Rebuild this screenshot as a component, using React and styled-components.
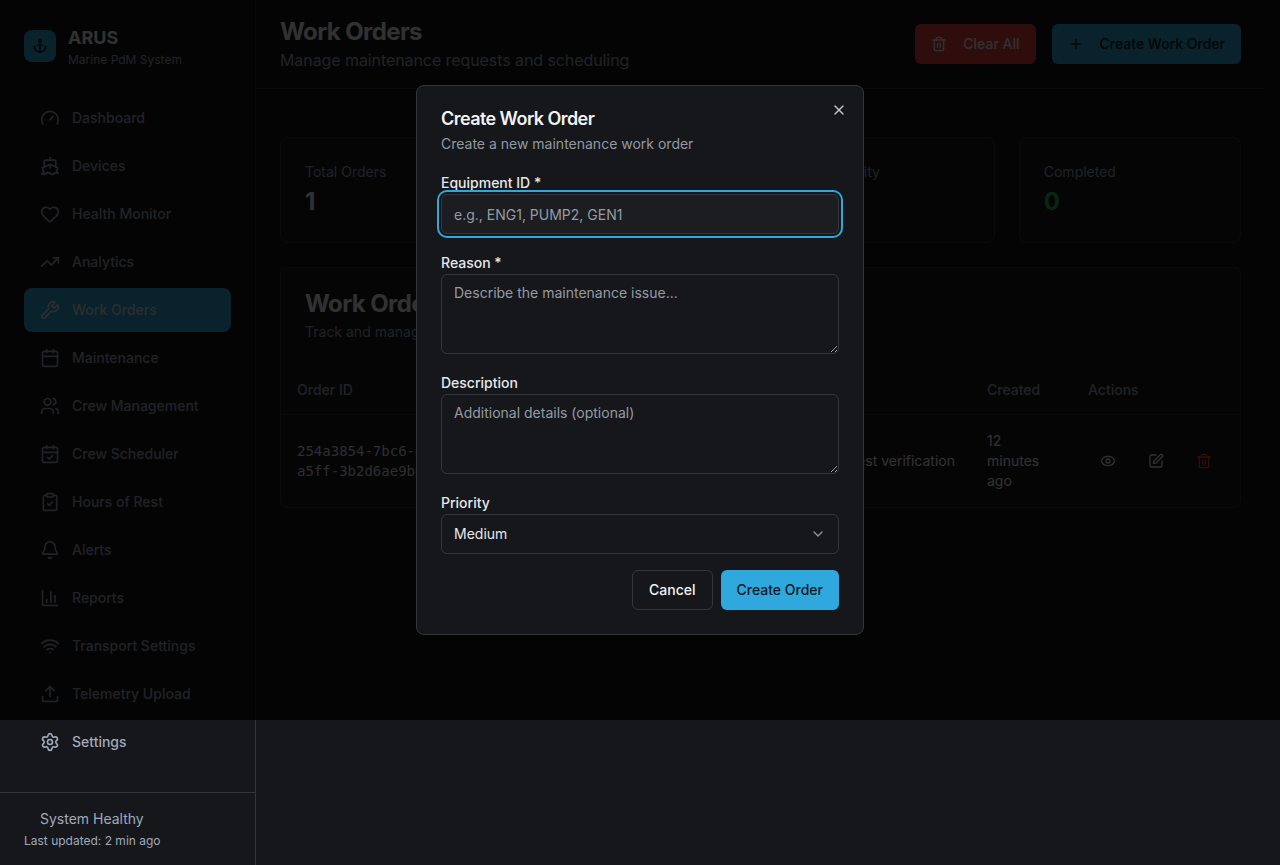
import React from 'react';
import styled, { createGlobalStyle } from 'styled-components';
import {
  Anchor, Gauge, Ship, Heart, TrendingUp, Wrench, Calendar, Users, CalendarCheck,
  ClipboardCheck, Bell, ChartColumn, Wifi, Upload, Settings, Trash2, Plus, Eye,
  SquarePen, X, ChevronDown,
} from 'lucide-react';

const GlobalStyle = createGlobalStyle`
  * { box-sizing: border-box; }
  html, body { margin: 0; height: 100%; background: #15171b; overflow: hidden; }
  body { font-family: Inter, "Liberation Sans", sans-serif; color: #f1f2f4; font-size: 14px; line-height: 20px; }
`;

const Shell = styled.div`
  display: flex;
  min-height: 865px;
  padding-right: 15px;
`;

const Sidebar = styled.aside`
  flex: 0 0 256px;
  display: flex;
  flex-direction: column;
  border-right: 1px solid #33363b;
`;

const Brand = styled.div`
  display: flex;
  align-items: center;
  gap: 12px;
  padding: 24px 24px 28px;
`;

const LogoTile = styled.div`
  width: 32px;
  height: 32px;
  border-radius: 8px;
  background: #2ea8dd;
  color: #10161c;
  display: flex;
  align-items: center;
  justify-content: center;
`;

const BrandName = styled.div`
  font-size: 18px;
  line-height: 28px;
  font-weight: 700;
  color: #f1f2f4;
`;

const BrandSub = styled.div`
  font-size: 12px;
  line-height: 16px;
  color: #a0aaba;
`;

const Nav = styled.nav`
  flex: 1;
  display: flex;
  flex-direction: column;
  gap: 4px;
  padding: 0 24px;
`;

const NavItem = styled.a`
  height: 44px;
  display: flex;
  align-items: center;
  gap: 12px;
  padding: 0 16px;
  border-radius: 8px;
  font-weight: 500;
  color: ${p => (p.$active ? '#dcdee2' : '#a0aaba')};
  background: ${p => (p.$active ? '#2ea8dd' : 'transparent')};
`;

const SidebarFooter = styled.div`
  border-top: 1px solid #33363b;
  padding: 16px 24px;
  height: 73px;
  color: #a0aaba;
`;

const HealthLine = styled.div`
  padding-left: 16px;
  margin-bottom: 4px;
`;

const UpdatedLine = styled.div`
  font-size: 12px;
  line-height: 16px;
`;

const Main = styled.main`
  flex: 1;
  min-width: 0;
`;

const PageHeader = styled.header`
  display: flex;
  align-items: center;
  justify-content: space-between;
  padding: 16px 24px;
  height: 89px;
  border-bottom: 1px solid #33363b;
`;

const PageTitle = styled.h1`
  margin: 0;
  font-size: 24px;
  line-height: 32px;
  font-weight: 700;
  letter-spacing: -0.6px;
`;

const PageSub = styled.p`
  margin: 0;
  font-size: 16px;
  line-height: 24px;
  letter-spacing: -0.08px;
  color: #a0aaba;
`;

const HeaderActions = styled.div`
  display: flex;
  gap: 16px;
`;

const HeaderButton = styled.button`
  height: 40px;
  display: flex;
  align-items: center;
  gap: 16px;
  padding: 0 16px;
  border: 0;
  border-radius: 6px;
  font: 500 14px/20px Inter, sans-serif;
  color: ${p => (p.$danger ? '#f1f2f4' : '#0e1a22')};
  background: ${p => (p.$danger ? '#ef4444' : '#2ea8dd')};
`;

const Content = styled.div`
  padding: 48px 24px 24px;
`;

const StatGrid = styled.div`
  display: grid;
  grid-template-columns: repeat(4, 1fr);
  gap: 24px;
  margin-bottom: 24px;
`;

const Card = styled.section`
  background: #191b20;
  border: 1px solid #33363b;
  border-radius: 8px;
`;

const StatCard = styled(Card)`
  padding: 24px;
  height: 106px;
`;

const StatLabel = styled.div`
  color: #a0aaba;
  margin-bottom: 4px;
`;

const StatValue = styled.div`
  font-size: 24px;
  line-height: 32px;
  font-weight: 700;
  color: ${p => p.$color || '#f1f2f4'};
`;

const TableHead = styled.div`
  padding: 24px 24px 24px;
`;

const TableTitle = styled.h2`
  margin: 0 0 6px;
  font-size: 24px;
  line-height: 24px;
  font-weight: 700;
  letter-spacing: -0.6px;
`;

const TableSub = styled.p`
  margin: 0;
  color: #a0aaba;
`;

const Table = styled.table`
  width: 100%;
  table-layout: fixed;
  border-collapse: collapse;
`;

const Th = styled.th`
  height: 48px;
  padding: 0 16px;
  text-align: left;
  font-weight: 500;
  color: #a0aaba;
  border-bottom: 1px solid #33363b;
`;

const Td = styled.td`
  padding: 16px;
  height: 92px;
  vertical-align: middle;
`;

const ReasonCell = styled(Td)`
  white-space: nowrap;
  text-align: right;
`;

const MonoCell = styled(Td)`
  font-family: "DejaVu Sans Mono", monospace;
  font-size: 14px;
  color: #dcdee2;
`;

const ActionRow = styled.div`
  display: flex;
  gap: 8px;
`;

const IconButton = styled.button`
  width: 40px;
  height: 40px;
  display: flex;
  align-items: center;
  justify-content: center;
  padding: 0;
  border: 0;
  background: transparent;
  color: ${p => (p.$danger ? '#ef4444' : '#f1f2f4')};
`;

const Overlay = styled.div`
  position: fixed;
  top: 0;
  left: 0;
  right: 0;
  height: 720px;
  background: rgba(0, 0, 0, 0.8);
`;

const Dialog = styled.div`
  position: fixed;
  top: 85px;
  left: 416px;
  width: 448px;
  padding: 24px;
  background: #15171b;
  border: 1px solid #33363b;
  border-radius: 8px;
  display: flex;
  flex-direction: column;
  gap: 19px;
`;

const CloseButton = styled.button`
  position: absolute;
  top: 16px;
  right: 16px;
  width: 16px;
  height: 16px;
  padding: 0;
  border: 0;
  background: transparent;
  color: #c4c6ca;
  display: flex;
`;

const DialogTitle = styled.h2`
  margin: 0 0 6px;
  font-size: 18px;
  line-height: 18px;
  font-weight: 600;
  letter-spacing: -0.56px;
`;

const DialogDesc = styled.p`
  margin: 0;
  color: #9499a1;
`;

const Field = styled.label`
  display: flex;
  flex-direction: column;
  gap: 1px;
`;

const LabelText = styled.span`
  font-weight: 500;
  line-height: 20px;
  color: #e6e8ea;
`;

const controlBase = `
  width: 100%;
  padding: 8px 12px;
  border-radius: 6px;
  border: 1px solid #33363b;
  background: transparent;
  color: #e6e8ea;
  font: 400 14px/20px Inter, sans-serif;
  outline: none;
  &::placeholder { color: #969ba3; opacity: 1; }
`;

const TextInput = styled.input`
  ${controlBase}
  height: 40px;
  background: #1b1d21;
  box-shadow: 0 0 0 2px #15171b, 0 0 0 4px #2ea8dd;
`;

const TextArea = styled.textarea`
  ${controlBase}
  display: block;
  height: 80px;
  resize: vertical;
`;

const SelectBox = styled.div`
  ${controlBase}
  height: 40px;
  display: flex;
  align-items: center;
  justify-content: space-between;
  & svg { color: #8f9399; }
`;

const DialogFooter = styled.div`
  display: flex;
  justify-content: flex-end;
  gap: 8px;
  margin-top: -3px;
`;

const FooterButton = styled.button`
  height: 40px;
  padding: 0 16px;
  border-radius: 6px;
  font: 500 14px/20px Inter, sans-serif;
  border: ${p => (p.$primary ? '0' : '1px solid #33363b')};
  background: ${p => (p.$primary ? '#2ea8dd' : 'transparent')};
  color: ${p => (p.$primary ? '#0e1a22' : '#f1f2f4')};
`;

const navItems = [
  [Gauge, 'Dashboard'], [Ship, 'Devices'], [Heart, 'Health Monitor'], [TrendingUp, 'Analytics'],
  [Wrench, 'Work Orders', true], [Calendar, 'Maintenance'], [Users, 'Crew Management'],
  [CalendarCheck, 'Crew Scheduler'], [ClipboardCheck, 'Hours of Rest'], [Bell, 'Alerts'],
  [ChartColumn, 'Reports'], [Wifi, 'Transport Settings'], [Upload, 'Telemetry Upload'], [Settings, 'Settings'],
];

const stats = [
  ['Total Orders', '1'], ['In Progress', '0', '#eab308'], ['High Priority', '0', '#ef4444'], ['Completed', '0', '#22c55e'],
];

const colWidths = [194, 102, 102, 102, 190, 101, 168];

export default function App() {
  return (
    <>
      <GlobalStyle />
      <Shell>
        <Sidebar>
          <Brand>
            <LogoTile><Anchor size={16} /></LogoTile>
            <div>
              <BrandName>ARUS</BrandName>
              <BrandSub>Marine PdM System</BrandSub>
            </div>
          </Brand>
          <Nav>
            {navItems.map(([Icon, label, active]) => (
              <NavItem key={label} $active={active}><Icon size={20} />{label}</NavItem>
            ))}
          </Nav>
          <SidebarFooter>
            <HealthLine>System Healthy</HealthLine>
            <UpdatedLine>Last updated: 2 min ago</UpdatedLine>
          </SidebarFooter>
        </Sidebar>
        <Main>
          <PageHeader>
            <div>
              <PageTitle>Work Orders</PageTitle>
              <PageSub>Manage maintenance requests and scheduling</PageSub>
            </div>
            <HeaderActions>
              <HeaderButton $danger><Trash2 size={16} />Clear All</HeaderButton>
              <HeaderButton><Plus size={16} />Create Work Order</HeaderButton>
            </HeaderActions>
          </PageHeader>
          <Content>
            <StatGrid>
              {stats.map(([label, value, color]) => (
                <StatCard key={label}>
                  <StatLabel>{label}</StatLabel>
                  <StatValue $color={color}>{value}</StatValue>
                </StatCard>
              ))}
            </StatGrid>
            <Card>
              <TableHead>
                <TableTitle>Work Orders</TableTitle>
                <TableSub>Track and manage all maintenance work orders</TableSub>
              </TableHead>
              <Table>
                <colgroup>
                  {colWidths.map((w, i) => <col key={i} width={w} />)}
                </colgroup>
                <thead>
                  <tr>
                    <Th>Order ID</Th><Th>Equipment</Th><Th>Priority</Th><Th>Status</Th>
                    <Th>Reason</Th><Th>Created</Th><Th>Actions</Th>
                  </tr>
                </thead>
                <tbody>
                  <tr>
                    <MonoCell>254a3854-7bc6-4e1d-a5ff-3b2d6ae9b0c1</MonoCell>
                    <Td>ENG1</Td><Td>Medium</Td><Td>Open</Td>
                    <ReasonCell>Test verification</ReasonCell>
                    <Td>12 minutes ago</Td>
                    <Td>
                      <ActionRow>
                        <IconButton><Eye size={16} /></IconButton>
                        <IconButton><SquarePen size={16} /></IconButton>
                        <IconButton $danger><Trash2 size={16} /></IconButton>
                      </ActionRow>
                    </Td>
                  </tr>
                </tbody>
              </Table>
            </Card>
          </Content>
        </Main>
      </Shell>
      <Overlay />
      <Dialog>
        <CloseButton><X size={16} /></CloseButton>
        <div>
          <DialogTitle>Create Work Order</DialogTitle>
          <DialogDesc>Create a new maintenance work order</DialogDesc>
        </div>
        <Field>
          <LabelText>Equipment ID *</LabelText>
          <TextInput placeholder="e.g., ENG1, PUMP2, GEN1" />
        </Field>
        <Field>
          <LabelText>Reason *</LabelText>
          <TextArea placeholder="Describe the maintenance issue..." />
        </Field>
        <Field>
          <LabelText>Description</LabelText>
          <TextArea placeholder="Additional details (optional)" />
        </Field>
        <Field>
          <LabelText>Priority</LabelText>
          <SelectBox>Medium<ChevronDown size={16} /></SelectBox>
        </Field>
        <DialogFooter>
          <FooterButton>Cancel</FooterButton>
          <FooterButton $primary>Create Order</FooterButton>
        </DialogFooter>
      </Dialog>
    </>
  );
}
